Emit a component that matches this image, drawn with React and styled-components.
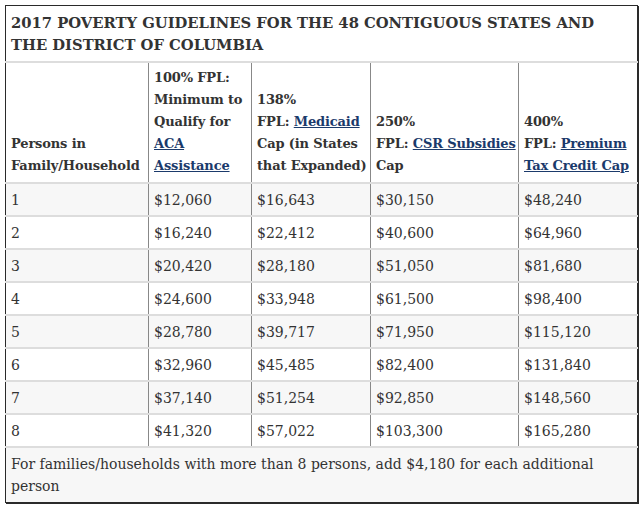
import styled, { createGlobalStyle } from 'styled-components'

const GlobalStyle = createGlobalStyle`
  body {
    margin: 0;
    background: #fff;
    font-family: "DejaVu Serif", "Liberation Serif", serif;
    color: #333;
  }
`

const rows = [
  ['1', '$12,060', '$16,643', '$30,150', '$48,240'],
  ['2', '$16,240', '$22,412', '$40,600', '$64,960'],
  ['3', '$20,420', '$28,180', '$51,050', '$81,680'],
  ['4', '$24,600', '$33,948', '$61,500', '$98,400'],
  ['5', '$28,780', '$39,717', '$71,950', '$115,120'],
  ['6', '$32,960', '$45,485', '$82,400', '$131,840'],
  ['7', '$37,140', '$51,254', '$92,850', '$148,560'],
  ['8', '$41,320', '$57,022', '$103,300', '$165,280'],
]

export default function App() {
  return (
    <>
      <GlobalStyle />
      <Page>
        <Table>
          <colgroup>
            <col style={{ width: 143 }} />
            <col style={{ width: 103 }} />
            <col style={{ width: 119 }} />
            <col style={{ width: 148 }} />
            <col />
          </colgroup>
          <thead>
            <tr>
              <Caption colSpan={5}>
                2017 POVERTY GUIDELINES FOR THE 48 CONTIGUOUS STATES AND THE DISTRICT OF COLUMBIA
              </Caption>
            </tr>
            <tr>
              <Head>Persons in<br />Family/Household</Head>
              <Head>
                100% FPL:<br />Minimum to<br />Qualify for<br />
                <Link href="#">ACA<br />Assistance</Link>
              </Head>
              <Head>
                138%<br />FPL: <Link href="#">Medicaid</Link><br />Cap (in States<br />that Expanded)
              </Head>
              <Head>250%<br />FPL: <Link href="#">CSR Subsidies</Link><br />Cap</Head>
              <Head>400%<br />FPL: <Link href="#">Premium<br />Tax Credit Cap</Link></Head>
            </tr>
          </thead>
          <tbody>
            {rows.map((r, i) => (
              <Row key={r[0]} $striped={i % 2 === 0}>
                {r.map((c, j) => (
                  <Cell key={j}>{c}</Cell>
                ))}
              </Row>
            ))}
            <Row $striped>
              <Note colSpan={5}>
                For families/households with more than 8 persons, add $4,180 for each additional person
              </Note>
            </Row>
          </tbody>
        </Table>
      </Page>
    </>
  )
}

const Page = styled.div`
  padding: 5px;
`

const Table = styled.table`
  width: 633px;
  table-layout: fixed;
  border-collapse: collapse;
  border: 1px solid #2a2a2a;
  box-shadow: 1px 1px 0 #2a2a2a;
`

const Caption = styled.th`
  text-align: left;
  font-size: 14.75px;
  font-weight: bold;
  line-height: 22px;
  padding: 6px 5px 5px;
  border-bottom: 2px solid #ddd;
`

const Head = styled.th`
  text-align: left;
  vertical-align: bottom;
  white-space: nowrap;
  font-size: 13px;
  letter-spacing: -0.15px;
  font-weight: bold;
  line-height: 22px;
  padding: 4px 5px 5px;
  border-left: 1px solid #888;
  border-bottom: 2px solid #ddd;

  &:first-child {
    border-left: none;
  }
`

const Link = styled.a`
  color: #1b3a6b;
  text-decoration: underline;
`

const Row = styled.tr`
  background: ${(p) => (p.$striped ? '#f7f7f7' : '#fff')};
`

const Cell = styled.td`
  font-size: 14px;
  line-height: 22px;
  padding: 5px 5px 4px;
  border-left: 1px solid #888;
  border-bottom: 2px solid #ddd;

  &:first-child {
    border-left: none;
  }
`

const Note = styled.td`
  font-size: 14px;
  line-height: 22px;
  padding: 5px 40px 5px 5px;
`
